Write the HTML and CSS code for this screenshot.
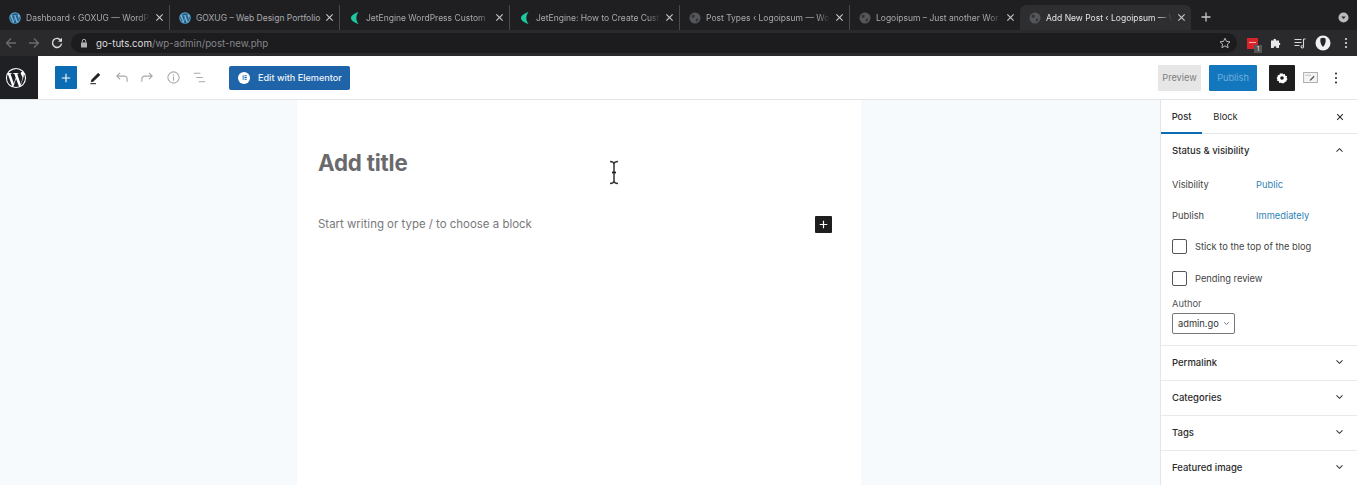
FILE: index.html
```html
<!DOCTYPE html>
<html lang="en">
<head>
<meta charset="utf-8">
<title>Add New Post</title>
<link rel="stylesheet" href="styles.css">
</head>
<body>
<svg class="defs" width="0" height="0" aria-hidden="true">
  <defs>
    <symbol id="wp" viewBox="0 0 24 24"><path d="M12 1a11 11 0 1 0 0 22 11 11 0 0 0 0-22zM2.200 12c0-1.400.3-2.800.9-4l4.700 12.800A9.800 9.800 0 0 1 2.200 12zM12 21.800c-1 0-1.900-.1-2.800-.4l2.900-8.500 3 8.200.2.300c-1 .3-2.100.4-3.300.4zm1.300-14.400c.6 0 1.100-.1 1.100-.1.5-.1.5-.8 0-.8 0 0-1.600.1-2.600.1-1 0-2.600-.1-2.600-.1-.5 0-.6.800 0 .8 0 0 .5.100 1 .1l1.500 4.200-2.100 6.400-3.600-10.600c.6 0 1.100-.1 1.100-.1.5-.1.5-.8 0-.8 0 0-1.600.1-2.600.1h-.6A9.800 9.800 0 0 1 19 5.200h-.1c-1 0-1.700.9-1.700 1.800 0 .8.500 1.500 1 2.300.4.700.800 1.500.800 2.800 0 .9-.3 1.900-.8 3.300l-1 3.300-3.900-11.300zm3.600 13.100 3-8.600c.6-1.400.7-2.500.7-3.500 0-.4 0-.7-.1-1a9.800 9.800 0 0 1-3.600 13.100z" fill-rule="evenodd"/></symbol>
    <symbol id="x" viewBox="0 0 10 10"><path d="M1.500 1.500l7 7M8.500 1.500l-7 7" fill="none" stroke="currentColor" stroke-width="1.300"/></symbol>
    <symbol id="jet" viewBox="0 0 12 12"><path d="M9.500 0C5 1.500 2 3.500 2 6s3 4.500 7.500 6C8 10 7.300 8 7.300 6S8 2 9.500 0z" fill="#1fc7a0"/></symbol>
    <symbol id="globe" viewBox="0 0 12 12"><circle cx="6" cy="6" r="5.500" fill="#55565a"/><path d="M3 2.500l3 1-1 2.500-2.500-.5zM7.500 6.500l2 .5-1.500 3-1.500-1z" fill="#333437"/></symbol>
    <symbol id="down" viewBox="0 0 12 8"><path d="M2 1.800l4 4 4-4" fill="none" stroke="currentColor" stroke-width="1.400"/></symbol>
    <symbol id="up" viewBox="0 0 12 8"><path d="M2 6.200l4-4 4 4" fill="none" stroke="currentColor" stroke-width="1.400"/></symbol>
  </defs>
</svg>

<header class="chrome">
  <div class="tabstrip">
    <div class="tab"><svg class="fav wpfav"><use href="#wp"/></svg><span class="tab-title">Dashboard ‹ GOXUG — WordP</span><svg class="tab-x"><use href="#x"/></svg></div>
    <div class="tab"><svg class="fav wpfav"><use href="#wp"/></svg><span class="tab-title tab-full">GOXUG – Web Design Portfolio</span><svg class="tab-x"><use href="#x"/></svg></div>
    <div class="tab"><svg class="fav"><use href="#jet"/></svg><span class="tab-title">JetEngine WordPress Custom</span><svg class="tab-x"><use href="#x"/></svg></div>
    <div class="tab"><svg class="fav"><use href="#jet"/></svg><span class="tab-title">JetEngine: How to Create Cust</span><svg class="tab-x"><use href="#x"/></svg></div>
    <div class="tab"><svg class="fav"><use href="#globe"/></svg><span class="tab-title">Post Types ‹ Logoipsum — Wo</span><svg class="tab-x"><use href="#x"/></svg></div>
    <div class="tab"><svg class="fav"><use href="#globe"/></svg><span class="tab-title">Logoipsum – Just another Wor</span><svg class="tab-x"><use href="#x"/></svg></div>
    <div class="tab tab-active"><svg class="fav"><use href="#globe"/></svg><span class="tab-title">Add New Post ‹ Logoipsum — W</span><svg class="tab-x"><use href="#x"/></svg></div>
    <svg class="newtab" viewBox="0 0 10 10"><path d="M5 .5v9M.5 5h9" stroke="currentColor" stroke-width="1.300"/></svg>
    <svg class="tabmenu" viewBox="0 0 12 12"><circle cx="6" cy="6" r="5.500" fill="#b9babc"/><path d="M3.500 5l2.500 2.500L8.500 5z" fill="#2a2a2d"/></svg>
  </div>
  <div class="navbar">
    <svg class="nav-ic dim" viewBox="0 0 12 12"><path d="M11 6H1.500M6 1.500L1.500 6 6 10.500" fill="none" stroke="currentColor" stroke-width="1.300"/></svg>
    <svg class="nav-ic dim" viewBox="0 0 12 12"><path d="M1 6h9.500M6 1.500L10.500 6 6 10.500" fill="none" stroke="currentColor" stroke-width="1.300"/></svg>
    <svg class="nav-ic" viewBox="0 0 12 12"><path d="M10 3.800A4.500 4.500 0 1 0 10.500 6.500" fill="none" stroke="currentColor" stroke-width="1.400"/><path d="M11 .8v4H7z" fill="currentColor"/></svg>
    <div class="omnibox">
      <svg class="lock" viewBox="0 0 8 10"><path d="M1 4.500h6V9.500H1z" fill="#aeafb1"/><path d="M2.300 4.500V3a1.700 1.700 0 0 1 3.400 0v1.500" fill="none" stroke="#aeafb1"/></svg>
      <span class="url"><b>go-tuts.com</b>/wp-admin/post-new.php</span>
      <svg class="star" viewBox="0 0 12 12"><path d="M6 1.200l1.500 3.200 3.500.4-2.600 2.400.7 3.500L6 8.900l-3.100 1.800.7-3.500L1 4.800l3.500-.4z" fill="none" stroke="#c8c8ca" stroke-width=".9"/></svg>
    </div>
    <div class="ext-group">
      <span class="ext-red"><span class="ext-dots"></span><span class="ext-badge">1</span></span>
      <svg class="ext" viewBox="0 0 12 12"><path d="M1 3.500h2.500a1.300 1.300 0 1 1 2.500 0h3v2.200a1.300 1.300 0 1 1 0 2.600V11H6.300a1.300 1.300 0 1 0-2.500 0H1z" fill="#e8e8e8"/></svg>
      <svg class="ext" viewBox="0 0 12 12"><path d="M.5 2.500h7M.5 5.500h7M.5 8.500h5" stroke="#d8d8d8" stroke-width="1.100"/><path d="M9.500 2v7.500a1.200 1.200 0 1 1-1-.9M9.500 2h2" fill="none" stroke="#d8d8d8" stroke-width="1.100"/></svg>
      <svg class="avatar" viewBox="0 0 16 16"><circle cx="8" cy="8" r="7.500" fill="#f1f1f1"/><path d="M5.500 3.500c1.500-1 3.500-1 5 0 .6 2.600 0 6-2.500 8.500-2.500-2.500-3.100-5.900-2.500-8.500z" fill="#26262a"/></svg>
      <svg class="dots" viewBox="0 0 4 12"><circle cx="2" cy="2" r="1.100" fill="#ddd"/><circle cx="2" cy="6" r="1.100" fill="#ddd"/><circle cx="2" cy="10" r="1.100" fill="#ddd"/></svg>
    </div>
  </div>
</header>

<div class="wp-bar">
  <a class="wp-logo"><svg><use href="#wp"/></svg></a>
  <div class="tools">
    <button class="add-btn"><svg viewBox="0 0 10 10"><path d="M5 .8v8.400M.8 5h8.400" stroke="#fff" stroke-width="1.100"/></svg></button>
    <svg class="tool" viewBox="0 0 16 16"><path d="M4 10.500l6.800-7 1.800 1.800-7 6.700-2.200.6z" fill="#1e1e1e" stroke="#1e1e1e" stroke-width=".8"/><path d="M2.500 14.600h6" stroke="#1e1e1e" stroke-width="1.100"/></svg>
    <svg class="tool" viewBox="0 0 16 16"><path d="M14 12.500V9.500a3 3 0 0 0-3-3H3M6.500 3L3 6.500 6.500 10" fill="none" stroke="#a8a8a8" stroke-width="1.200"/></svg>
    <svg class="tool" viewBox="0 0 16 16"><path d="M2 12.500V9.500a3 3 0 0 1 3-3h8M9.500 3L13 6.500 9.500 10" fill="none" stroke="#a8a8a8" stroke-width="1.200"/></svg>
    <svg class="tool" viewBox="0 0 16 16"><circle cx="8" cy="8" r="6" fill="none" stroke="#a8a8a8" stroke-width="1.100"/><path d="M8 7v4.500M8 4.500v1.300" stroke="#a8a8a8" stroke-width="1.200"/></svg>
    <svg class="tool" viewBox="0 0 16 16"><path d="M2 3.500h7M4.500 8h7M7 12.500h7" stroke="#a8a8a8" stroke-width="1.200"/></svg>
    <button class="elementor"><span class="el-logo"><svg viewBox="0 0 10 10"><path d="M3 2.500h1v5H3zM5 2.500h2.500v1H5zM5 4.500h2.500v1H5zM5 6.500h2.500v1H5z" fill="#1f64a8"/></svg></span>Edit with Elementor</button>
  </div>
  <div class="actions">
    <button class="preview">Preview</button>
    <button class="publish">Publish</button>
    <button class="settings"><svg viewBox="0 0 12 12"><path d="M6 .8l1 1.500 1.800-.4.400 1.800 1.800.4-.4 1.900 1 1-1 1-.2 1.500-1.800.4-.4 1.300L6 11.200 5 10.700l-1.800.2-.4-1.800L1 8.700 1.400 7 .5 6l1-1 .2-1.700 1.800-.4.400-1.700 1.700.5z" fill="#fff"/><circle cx="6" cy="6" r="1.800" fill="#1e1e1e"/></svg></button>
    <svg class="jetpack" viewBox="0 0 16 12"><rect x=".5" y=".5" width="15" height="11" fill="#f4f4f4" stroke="#a9a9a9"/><path d="M7.500 8.200l4-4 1 1-4 4-1.500.4z" fill="#555"/><path d="M2.500 3.500h6" stroke="#bbb"/></svg>
    <svg class="more" viewBox="0 0 4 12"><circle cx="2" cy="1.500" r="1" fill="#1e1e1e"/><circle cx="2" cy="6" r="1" fill="#1e1e1e"/><circle cx="2" cy="10.500" r="1" fill="#1e1e1e"/></svg>
  </div>
</div>

<main class="workspace">
  <section class="canvas">
    <div class="sheet">
      <h1 class="post-title">Add title</h1>
      <div class="block-row">
        <p class="placeholder">Start writing or type / to choose a block</p>
        <button class="inline-add"><svg viewBox="0 0 10 10"><path d="M5 .8v8.400M.8 5h8.400" stroke="#fff" stroke-width="1.300"/></svg></button>
      </div>
      <svg class="ibeam" viewBox="0 0 10 24"><path d="M1 1C3.500 1 5 2.200 5 4v16c0 1.800-1.500 3-4 3M9 1C6.500 1 5 2.200 5 4v16c0 1.800 1.500 3 4 3" fill="none" stroke="#333" stroke-width="1.500"/><path d="M3 12h4" stroke="#222" stroke-width="1.800"/></svg>
    </div>
  </section>
  <aside class="sidebar">
    <div class="side-tabs">
      <span class="side-tab side-tab-on">Post</span>
      <span class="side-tab side-tab-next">Block</span>
      <svg class="side-x"><use href="#x"/></svg>
    </div>
    <section class="panel panel-open">
      <div class="panel-head"><span>Status &amp; visibility</span><svg class="chev"><use href="#up"/></svg></div>
      <div class="field field-first"><span class="field-label">Visibility</span><a class="field-link">Public</a></div>
      <div class="field"><span class="field-label">Publish</span><a class="field-link">Immediately</a></div>
      <label class="check"><span class="box"></span>Stick to the top of the blog</label>
      <label class="check"><span class="box"></span>Pending review</label>
      <div class="author-label">Author</div>
      <div class="select">admin.go<svg class="sel-chev"><use href="#down"/></svg></div>
    </section>
    <section class="panel"><div class="panel-head"><span>Permalink</span><svg class="chev"><use href="#down"/></svg></div></section>
    <section class="panel"><div class="panel-head"><span>Categories</span><svg class="chev"><use href="#down"/></svg></div></section>
    <section class="panel"><div class="panel-head"><span>Tags</span><svg class="chev"><use href="#down"/></svg></div></section>
    <section class="panel"><div class="panel-head"><span>Featured image</span><svg class="chev"><use href="#down"/></svg></div></section>
  </aside>
</main>
</body>
</html>
```
FILE: styles.css
```css
* { box-sizing: border-box; }
html, body { margin: 0; padding: 0; }
body {
  width: 1357px;
  height: 485px;
  overflow: hidden;
  background: #fff;
  font-family: Inter, "Liberation Sans", sans-serif;
  color: #1e1e1e;
  display: flex;
  flex-direction: column;
}
.defs { display: block; height: 0; }
button { border: 0; padding: 0; font-family: inherit; }

/* browser chrome */
.chrome { background: #1f1f22; flex: none; height: 56px; display: flex; flex-direction: column; }
.tabstrip { height: 30px; padding-top: 5px; display: flex; align-items: stretch; position: relative; }
.tab {
  width: 170px;
  height: 25px;
  padding: 0 5px 0 9px;
  display: flex;
  align-items: center;
  gap: 5px;
  color: #a9aaac;
  font-size: 8.500px;
  border-right: 1px solid #48494c;
  background: #1f1f22;
}
.tab:nth-child(6) { border-right: 0; }
.tab-active { width: 171px; background: #2e2e31; color: #e4e4e5; border-right: 0; border-radius: 6px 6px 0 0; }
.fav { width: 12px; height: 12px; flex: none; }
.wpfav { fill: #7cb2d4; background: #1f5f87; border-radius: 50%; }
.tab-title {
  flex: 1;
  min-width: 0;
  white-space: nowrap;
  -webkit-mask-image: linear-gradient(90deg, #000 90%, transparent 100%);
  mask-image: linear-gradient(90deg, #000 90%, transparent 100%);
}
.tab-title.tab-full { -webkit-mask-image: none; mask-image: none; }
.tab-x { width: 9px; height: 9px; flex: none; color: #c4c4c6; }
.newtab { width: 10px; height: 10px; color: #c8c8ca; margin: 7px 0 0 10px; flex: none; }
.tabmenu { width: 11px; height: 11px; position: absolute; right: 8px; top: 12px; }
.navbar {
  height: 26px;
  background: #2a2a2d;
  display: flex;
  align-items: center;
  padding: 0 7px 0 5px;
}
.nav-ic { width: 12px; height: 12px; color: #dadada; margin-right: 11px; flex: none; }
.nav-ic.dim { color: #6a6b6e; }
.omnibox {
  width: 1166px;
  height: 20px;
  margin-left: -3px;
  background: #1c1c1f;
  border-radius: 10px;
  display: flex;
  align-items: center;
  padding: 0 6px 0 9px;
  color: #85868a;
  font-size: 9.700px;
}
.lock { width: 8px; height: 10px; flex: none; }
.url { margin-left: 8px; flex: 1; }
.url b { color: #dcdcdd; font-weight: 400; }
.star { width: 12px; height: 12px; flex: none; }
.ext-group { display: flex; align-items: center; margin-left: 10px; gap: 12px; flex: 1; }
.ext-red { width: 11px; height: 11px; background: #d8232a; position: relative; flex: none; }
.ext-dots { position: absolute; left: 2px; top: 4px; width: 7px; height: 1px; background: #f3b4b4; }
.ext-badge { position: absolute; left: 7px; top: 7px; width: 8px; height: 8px; background: #555; color: #eee; font-size: 6px; line-height: 8px; text-align: center; }
.ext { width: 12px; height: 12px; flex: none; }
.avatar { width: 16px; height: 16px; flex: none; margin-left: -3px; }
.dots { width: 4px; height: 12px; flex: none; margin-left: 1px; }

/* wp top bar */
.wp-bar { flex: none; height: 44px; display: flex; align-items: center; border-bottom: 1px solid #e4e5e7; background: #fff; }
.wp-logo { width: 38px; height: 43px; background: #1e2024; display: flex; align-items: center; padding-left: 5px; flex: none; }
.wp-logo svg { width: 22px; height: 22px; fill: #fff; }
.tools { display: flex; align-items: center; margin-left: 17px; }
.add-btn { width: 22px; height: 23px; background: #0c6cb3; border-radius: 1px; display: flex; align-items: center; justify-content: center; }
.add-btn svg { width: 10px; height: 10px; }
.tool { width: 15px; height: 15px; flex: none; margin-left: 11px; }
.elementor {
  margin-left: 22px;
  width: 121px;
  height: 24px;
  background: #1f64a8;
  color: #eef3f8;
  border-radius: 2px;
  font-size: 9.100px;
  font-weight: 500;
  display: flex;
  align-items: center;
  padding-left: 9px;
  gap: 8px;
}
.el-logo { width: 12px; height: 12px; background: #fff; border-radius: 50%; display: flex; align-items: center; justify-content: center; }
.el-logo svg { width: 9px; height: 9px; }
.actions { margin-left: auto; display: flex; align-items: center; padding-right: 19px; }
.preview { width: 43px; height: 26px; background: #e6e6e7; color: #7d7e80; font-size: 9.200px; }
.publish { width: 48px; height: 26px; margin-left: 8px; background: #1277bd; color: #71aedb; font-size: 9.200px; border-radius: 1px; }
.settings { width: 26px; height: 26px; margin-left: 12px; background: #1e1e1e; border-radius: 1px; display: flex; align-items: center; justify-content: center; }
.settings svg { width: 12px; height: 12px; }
.jetpack { width: 15px; height: 11px; margin-left: 8px; flex: none; }
.more { width: 4px; height: 12px; margin-left: 16px; flex: none; }

/* workspace */
.workspace { flex: 1; min-height: 0; display: flex; background: #f6fafd; }
.canvas { flex: 1; min-width: 0; padding-left: 297px; }
.sheet { width: 564px; height: 100%; background: #fff; padding: 50px 29px 0 21px; position: relative; }
.post-title { margin: 0; font-size: 22.300px; line-height: 26px; font-weight: 700; color: #6a6a6c; letter-spacing: -.2px; }
.block-row { margin-top: 40px; display: flex; align-items: center; justify-content: space-between; height: 16px; }
.placeholder { margin: 0; font-size: 11.450px; color: #77787a; }
.inline-add { width: 17px; height: 17px; background: #1e1e1e; border-radius: 1px; display: flex; align-items: center; justify-content: center; }
.inline-add svg { width: 9px; height: 9px; }
.ibeam { position: absolute; left: 312px; top: 60px; width: 10px; height: 25px; }

/* sidebar */
.sidebar { width: 197px; flex: none; background: #fff; border-left: 1px solid #e4e5e7; font-size: 9.300px; }
.side-tabs { height: 34px; border-bottom: 1px solid #e4e5e7; display: flex; align-items: stretch; position: relative; font-weight: 500; color: #2b2b2b; }
.side-tab { width: 41px; display: flex; align-items: center; justify-content: center; }
.side-tab-next { margin-left: 3px; font-weight: 400; }
.side-tab-on { border-bottom: 2px solid #0c6cb3; padding-top: 1px; margin-bottom: -1px; }
.side-x { width: 8px; height: 8px; margin: 13px 13px 0 auto; }
.panel { border-bottom: 1px solid #e9eaeb; }
.panel-head { height: 34px; padding: 0 13px 2px 11px; display: flex; align-items: center; justify-content: space-between; font-size: 9.500px; font-weight: 500; color: #2b2b2b; }
.chev { width: 9px; height: 6px; color: #333; flex: none; }
.panel-open { height: 212px; }
.field { display: flex; align-items: center; height: 16px; padding-left: 11px; margin-bottom: 15px; color: #444; }
.field-first { margin-top: 8px; }
.field-label { width: 84px; }
.field-link { color: #2f83b5; }
.check { display: flex; align-items: center; height: 16px; padding-left: 11px; color: #444; gap: 8px; margin-bottom: 16px; }
.box { width: 15px; height: 15px; border: 1px solid #555; border-radius: 2px; background: #fff; flex: none; }
.author-label { padding-left: 11px; color: #555; margin-top: -5px; height: 13px; line-height: 13px; }
.select { margin: 3px 0 0 11px; width: 63px; height: 21px; border: 1px solid #777; border-radius: 2px; display: flex; align-items: center; padding-left: 5px; gap: 4px; color: #333; }
.sel-chev { width: 7px; height: 5px; color: #555; }
```
